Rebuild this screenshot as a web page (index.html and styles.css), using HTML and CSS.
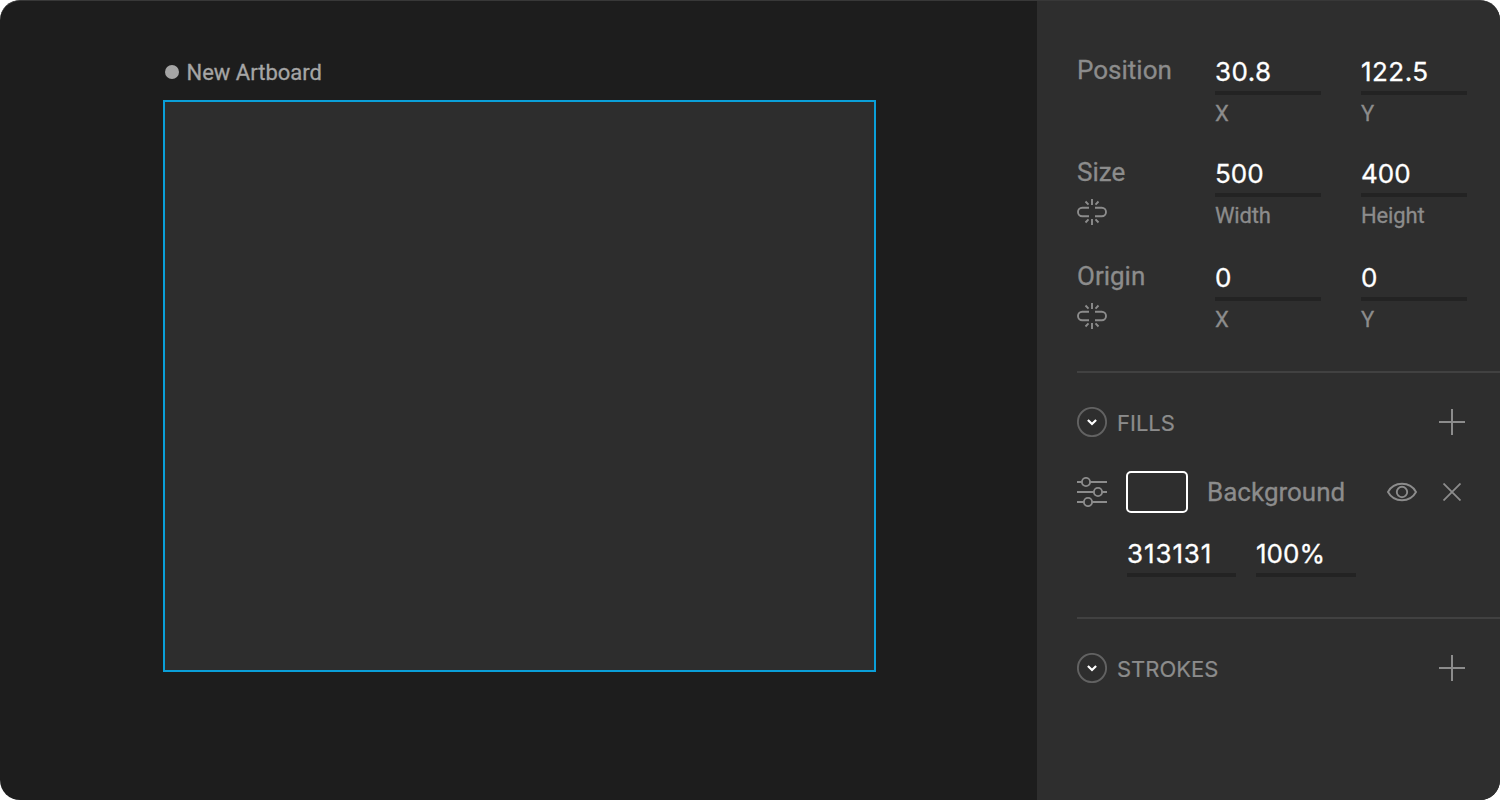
FILE: index.html
```html
<!DOCTYPE html>
<html lang="en">
<head>
<meta charset="utf-8">
<title>Artboard editor</title>
<link rel="stylesheet" href="styles.css">
</head>
<body>
<svg class="symbols">
  <symbol id="unlink" viewBox="0 0 30 30"><path d="M12 10.800H5.200a4.200 4.200 0 0 0 0 8.400H12M18 10.800h6.800a4.200 4.200 0 0 1 0 8.400H18M15 2v6M15 22v6M8.500 4.500l3 3.200M21.500 4.500l-3 3.200M8.500 25.500l3-3.200M21.500 25.500l-3-3.200"/></symbol>
  <symbol id="chevron" viewBox="0 0 30 30"><circle cx="15" cy="15" r="14.100"/><path class="tick" d="M10.900 13l4.100 4 4.100-4"/></symbol>
  <symbol id="plus" viewBox="0 0 26 26"><path d="M13 0v26M0 13h26"/></symbol>
</svg>
<main class="window">
  <section class="canvas">
    <h1 class="artboard-name"><span class="dot"></span><span class="artboard-title">New Artboard</span></h1>
    <div class="artboard"></div>
  </section>
  <aside class="inspector">
    <section class="transform">
      <div class="row">
        <div class="label"><span class="label-text">Position</span></div>
        <div class="field"><div class="value decimal"><span>30.8</span></div><div class="caption">X</div></div>
        <div class="field"><div class="value decimal"><span>122.5</span></div><div class="caption">Y</div></div>
      </div>
      <div class="row size">
        <div class="label"><span class="label-text">Size</span><svg class="icon"><use href="#unlink"/></svg></div>
        <div class="field"><div class="value"><span>500</span></div><div class="caption">Width</div></div>
        <div class="field"><div class="value"><span>400</span></div><div class="caption">Height</div></div>
      </div>
      <div class="row">
        <div class="label"><span class="label-text">Origin</span><svg class="icon"><use href="#unlink"/></svg></div>
        <div class="field"><div class="value"><span>0</span></div><div class="caption">X</div></div>
        <div class="field"><div class="value"><span>0</span></div><div class="caption">Y</div></div>
      </div>
    </section>
    <section class="group fills">
      <header class="group-head"><svg class="icon toggle"><use href="#chevron"/></svg><h2 class="group-title">FILLS</h2><svg class="plus"><use href="#plus"/></svg></header>
      <div class="fill-row">
        <svg class="icon" viewBox="0 0 30 30"><path d="M0 5h4.800M13.200 5H30M0 15h16.800M25.200 15H30M0 25h6.800M15.200 25H30"/><circle cx="9" cy="5" r="4.100"/><circle cx="21" cy="15" r="4.100"/><circle cx="11" cy="25" r="4.100"/></svg>
        <span class="swatch"></span>
        <span class="fill-name">Background</span>
        <svg class="icon eye" viewBox="0 0 30 30"><path d="M1 15C4 9.500 9 6.800 15 6.800S26 9.500 29 15C26 20.500 21 23.200 15 23.200S4 20.500 1 15Z"/><circle cx="15" cy="15" r="5.200"/></svg>
        <svg class="close" viewBox="0 0 18 18"><path d="M.5.5l17 17M17.500.5l-17 17"/></svg>
      </div>
      <div class="fill-values">
        <div class="value hex"><span>313131</span></div>
        <div class="value alpha"><span>100%</span></div>
      </div>
    </section>
    <section class="group">
      <header class="group-head"><svg class="icon toggle"><use href="#chevron"/></svg><h2 class="group-title">STROKES</h2><svg class="plus"><use href="#plus"/></svg></header>
    </section>
  </aside>
</main>
</body>
</html>
```
FILE: styles.css
```css
* { box-sizing: border-box; }
body { margin: 0; background: #fff; font-family: Roboto, sans-serif; }
h1, h2 { margin: 0; font-weight: 400; }
.symbols { display: none; }
.window { display: flex; width: 1500px; height: 800px; border-radius: 20px; overflow: hidden; background: #1d1d1d; border-top: 1px solid #383838; }
.canvas { width: 1037px; padding: 55px 0 0 163px; }
.artboard-name { display: flex; align-items: center; gap: 8px; height: 32px; padding-left: 2px; color: #a5a5a5; font-size: 22px; -webkit-text-stroke: .3px; }
.dot { width: 14px; height: 14px; margin-left: -.5px; border-radius: 50%; background: #a5a5a5; }
.artboard { width: 713px; height: 572px; margin-top: 12px; background: #2d2d2d; border: 2px solid #0a9fd8; }
.inspector { width: 463px; padding: 50px 0 0 40px; background: #2e2e2e; color: #8c8c8c; }
.transform { height: 320px; }
.row { display: flex; gap: 40px; height: 102px; }
.row.size { height: 104px; }
.label { width: 98px; }
.label-text { display: block; height: 44px; font-size: 26px; line-height: 38px; -webkit-text-stroke: .3px; }
.icon { display: block; flex: none; width: 30px; height: 30px; fill: none; stroke: #8c8c8c; stroke-width: 1.9; }
.field { width: 106px; }
.value { height: 44px; border-bottom: 4px solid #232323; color: #fff; font-family: Inter, sans-serif; font-size: 26px; line-height: 42px; white-space: nowrap; -webkit-text-stroke: .3px; }
.decimal { letter-spacing: .45px; }
.caption { font-size: 22px; line-height: 38px; letter-spacing: -.15px; -webkit-text-stroke: .3px; }
.group { height: 246px; padding-top: 34px; border-top: 2px solid #414141; }
.group-head { display: flex; align-items: center; height: 30px; padding-right: 35px; }
.group-title { margin-left: 10px; padding-top: 2px; font-family: Inter, sans-serif; font-size: 22px; line-height: 32px; -webkit-text-stroke: .2px; }
.toggle { stroke: #626262; }
.tick { stroke: #fff; stroke-width: 2.2; }
.plus { width: 26px; height: 26px; margin-left: auto; fill: none; stroke: #8c8c8c; stroke-width: 2; }
.fill-row { display: flex; align-items: center; height: 42px; margin-top: 34px; }
.swatch { width: 62px; height: 42px; margin: 0 19px; border: 2px solid #fff; border-radius: 5px; }
.fill-name { width: 180px; font-size: 26px; -webkit-text-stroke: .3px; }
.eye { margin-right: 26px; }
.close { width: 18px; height: 18px; fill: none; stroke: #8c8c8c; stroke-width: 1.8; }
.fill-values { display: flex; gap: 20px; margin: 20px 0 0 50px; }
.hex { width: 109px; letter-spacing: .9px; }
.alpha { width: 100px; }
```
